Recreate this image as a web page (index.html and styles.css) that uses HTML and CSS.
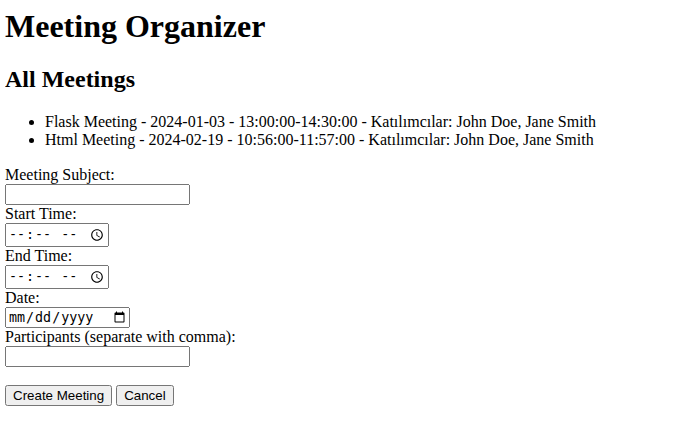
FILE: index.html
```html
<!DOCTYPE html>
<html>
<head>
<meta charset="utf-8">
<title>Meeting Organizer</title>
<link rel="stylesheet" href="styles.css">
</head>
<body class="page">
<h1 class="title">Meeting Organizer</h1>
<h2 class="subtitle">All Meetings</h2>
<ul class="meetings">
<li>Flask Meeting - 2024-01-03 - 13:00:00-14:30:00 - Katılımcılar: John Doe, Jane Smith</li>
<li>Html Meeting - 2024-02-19 - 10:56:00-11:57:00 - Katılımcılar: John Doe, Jane Smith</li>
</ul>
<form class="meeting-form">
<label for="subject">Meeting Subject:</label><br>
<input type="text" id="subject" class="field"><br>
<label for="start">Start Time:</label><br>
<input type="time" id="start" class="field mono"><br>
<label for="end">End Time:</label><br>
<input type="time" id="end" class="field mono"><br>
<label for="date">Date:</label><br>
<input type="date" id="date" class="field mono"><br>
<label for="participants">Participants (separate with comma):</label><br>
<input type="text" id="participants" class="field"><br><br>
<button type="submit" class="btn">Create Meeting</button>
<button type="button" class="btn">Cancel</button>
</form>
</body>
</html>
```

FILE: styles.css
```css
.page {
  margin: 5px;
  font-family: "Liberation Serif", serif;
  font-size: 16px;
  color: #000;
  background: #fff;
}
.title {
  font-size: 32px;
  margin: 3px 0 21px;
}
.subtitle {
  font-size: 24px;
  margin: 20px 0;
}
.meetings {
  margin: 16px 0 17px;
  padding-left: 40px;
}
.meeting-form {
  margin: 0;
}
.field {
  font-family: "Liberation Sans", sans-serif;
  font-size: 13.33px;
}
.field.mono {
  font-family: "DejaVu Sans Mono", monospace;
  font-size: 13.33px;
}
.btn {
  font-family: "Liberation Sans", sans-serif;
  font-size: 13.33px;
}
```
